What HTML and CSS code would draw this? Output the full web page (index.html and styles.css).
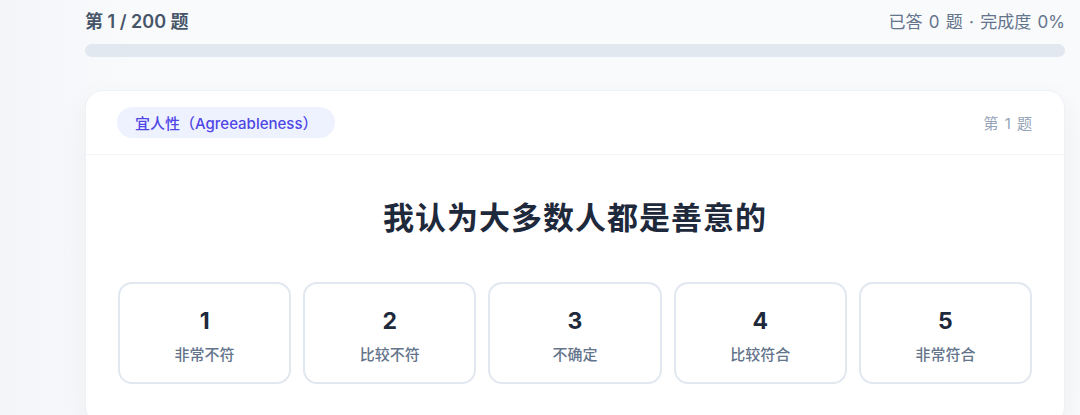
FILE: index.html
```html
<!DOCTYPE html>
<html lang="zh-CN">
<head>
<meta charset="utf-8">
<title>测评</title>
<link rel="stylesheet" href="styles.css">
</head>
<body>
<main class="page">
  <div class="progress-head">
    <span class="progress-count">第 1 / 200 题</span>
    <span class="progress-stat">已答 0 题 · 完成度 0%</span>
  </div>
  <div class="progress-track"><div class="progress-fill" style="width:0%"></div></div>

  <section class="card">
    <header class="card-head">
      <span class="badge">宜人性（Agreeableness）</span>
      <span class="qno">第 1 题</span>
    </header>
    <div class="card-body">
      <h1 class="question">我认为大多数人都是善意的</h1>
      <div class="options">
        <button class="option"><span class="opt-num">1</span><span class="opt-label">非常不符</span></button>
        <button class="option"><span class="opt-num">2</span><span class="opt-label">比较不符</span></button>
        <button class="option"><span class="opt-num">3</span><span class="opt-label">不确定</span></button>
        <button class="option"><span class="opt-num">4</span><span class="opt-label">比较符合</span></button>
        <button class="option"><span class="opt-num">5</span><span class="opt-label">非常符合</span></button>
      </div>
    </div>
  </section>
</main>
</body>
</html>
```

FILE: styles.css
```css
* { box-sizing: border-box; }
html, body { margin: 0; padding: 0; }
body {
  font-family: Inter, "Noto Sans CJK SC", sans-serif;
  background: linear-gradient(90deg, #f3f5f8 0%, #f8fafc 12%, #f8fafc 100%);
  color: #1e293b;
  height: 415px;
  overflow: hidden;
}
.page {
  margin-left: 85px;
  width: 980px;
  padding-top: 7px;
}
.progress-head {
  display: flex;
  justify-content: space-between;
  align-items: center;
  height: 26px;
}
.progress-count {
  font-size: 18px;
  font-weight: 600;
  color: #475569;
}
.progress-stat {
  font-size: 17px;
  color: #64748b;
  word-spacing: 1.5px;
}
.progress-track {
  margin-top: 11px;
  height: 13px;
  border-radius: 7px;
  background: #e2e8f0;
  overflow: hidden;
}
.progress-fill {
  height: 100%;
  background: #6366f1;
}
.card {
  margin-top: 33px;
  background: #fff;
  border: 1px solid #eef1f5;
  border-radius: 18px;
  box-shadow: 0 10px 30px rgba(15, 23, 42, 0.05);
  overflow: hidden;
}
.card-head {
  display: flex;
  justify-content: space-between;
  align-items: center;
  padding: 16px 32px 16px 31px;
  border-bottom: 1px solid #f1f5f9;
}
.badge {
  display: inline-flex;
  align-items: center;
  height: 31px;
  padding: 0 18px;
  border-radius: 16px;
  background: #eef2ff;
  color: #4f46e5;
  font-size: 15px;
  font-weight: 500;
}
.qno {
  font-size: 15px;
  color: #94a3b8;
  word-spacing: 2px;
}
.card-body {
  padding: 32px 32px 40px;
}
.question {
  margin: 11px 0 0;
  text-align: center;
  font-size: 31px;
  font-weight: 700;
  letter-spacing: 1px;
  color: #1e293b;
  line-height: 40px;
}
.options {
  margin-top: 44px;
  display: grid;
  grid-template-columns: repeat(5, 1fr);
  gap: 12px;
}
.option {
  display: flex;
  flex-direction: column;
  align-items: center;
  justify-content: center;
  height: 102px;
  background: #fff;
  border: 2px solid #e2e8f0;
  border-radius: 14px;
  font-family: inherit;
  cursor: pointer;
  padding: 6px 0 0;
}
.opt-num {
  font-size: 23px;
  font-weight: 700;
  color: #1e293b;
  line-height: 28px;
}
.opt-label {
  margin-top: 10px;
  font-size: 15px;
  font-weight: 500;
  color: #64748b;
  line-height: 20px;
}
```
